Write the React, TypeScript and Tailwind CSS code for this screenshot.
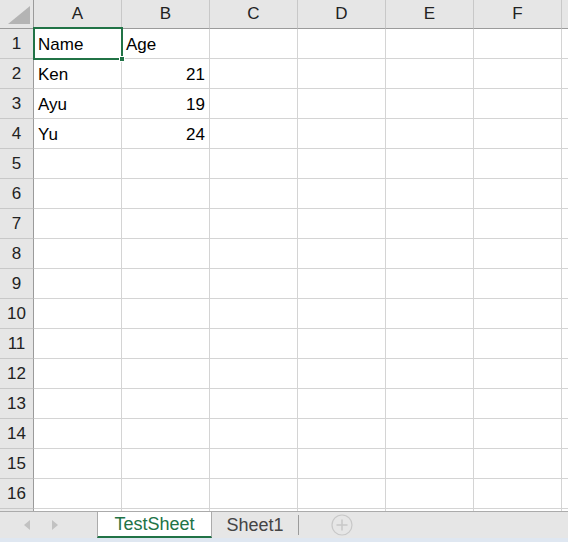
const COLS = ["A", "B", "C", "D", "E", "F", ""];

const DATA: Record<number, [string, string]> = {
  1: ["Name", "Age"],
  2: ["Ken", "21"],
  3: ["Ayu", "19"],
  4: ["Yu", "24"],
};

function Corner() {
  return (
    <div className="relative bg-[#e6e6e6] border-r border-b border-[#9b9b9b]">
      <svg width="34" height="29" className="absolute left-0 top-0">
        <polygon points="30,6 30,24 8,24" fill="#b4b4b4" />
      </svg>
    </div>
  );
}

function Row({ n, label }: { n: number; label: boolean }) {
  const row = DATA[n];
  return (
    <>
      <div className="flex items-center justify-center bg-[#e6e6e6] border-r border-[#9b9b9b] border-b border-b-[#c8c8c8] text-[#222]">
        {label ? n : ""}
      </div>
      {COLS.map((c, i) => {
        let text = "";
        let right = false;
        if (row && i === 0) text = row[0];
        if (row && i === 1) {
          text = row[1];
          right = n > 1;
        }
        return (
          <div
            key={c + i}
            className={`flex items-end pb-[3px] px-[4px] border-r border-b border-[#d4d4d4] text-black ${
              right ? "justify-end" : "justify-start"
            }`}
          >
            {text}
          </div>
        );
      })}
    </>
  );
}

export default function App() {
  const rows = Array.from({ length: 17 }, (_, i) => i + 1);
  return (
    <div className="w-[568px] h-[542px] bg-white overflow-hidden flex flex-col font-['Liberation_Sans',sans-serif] text-[17px] leading-[20px]">
      <div className="relative h-[511px] overflow-hidden">
        <div className="grid grid-cols-[34px_repeat(6,88px)_1fr] grid-rows-[29px] auto-rows-[30px]">
          <Corner />
          {COLS.map((c, i) => (
            <div
              key={"h" + i}
              className="flex items-center justify-center bg-[#e6e6e6] border-r border-r-[#c8c8c8] border-b border-b-[#9b9b9b] text-[#222]"
            >
              {c}
            </div>
          ))}
          {/* row 17 only peeks out under the last row */}
          {rows.map((n) => (
            <Row key={n} n={n} label={n < 17} />
          ))}
        </div>
        {/* active cell A1 */}
        <div className="absolute left-[33px] top-[27px] w-[90px] h-[33px] border-2 border-[#217346]" />
        <div className="absolute left-[119px] top-[56px] w-[6px] h-[6px] bg-[#217346] border border-white" />
      </div>

      {/* sheet tabs */}
      <div className="h-[27px] border-t border-[#ababab] bg-[#e6e6e6] flex items-stretch">
        <div className="w-[97px] flex items-center">
          <svg width="6" height="10" className="ml-[24px]">
            <polygon points="6,0 6,10 0,5" fill="#c2c2c2" />
          </svg>
          <svg width="6" height="10" className="ml-[22px]">
            <polygon points="0,0 0,10 6,5" fill="#c2c2c2" />
          </svg>
        </div>
        <div className="w-[115px] bg-white border-x border-[#ababab] border-b-2 border-b-[#217346] flex items-center justify-center text-[18px] text-[#217346]">
          TestSheet
        </div>
        <div className="w-[86px] flex items-center justify-center text-[18px] text-[#444]">
          Sheet1
        </div>
        <div className="w-px h-[20px] self-center bg-[#9b9b9b]" />
        <div className="ml-[32px] flex items-center">
          <svg width="22" height="22" viewBox="0 0 22 22">
            <circle cx="11" cy="11" r="10" fill="none" stroke="#c8c8c8" strokeWidth="1.2" />
            <path d="M11 5.5v11M5.5 11h11" stroke="#c8c8c8" strokeWidth="1.5" />
          </svg>
        </div>
      </div>
      <div className="h-[4px] bg-[#dfe7f1]" />
    </div>
  );
}
